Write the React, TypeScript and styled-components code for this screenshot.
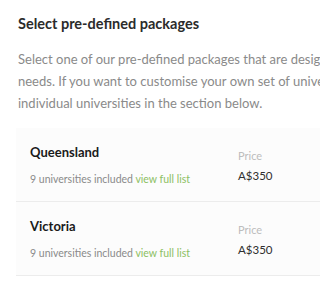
import React from 'react';
import styled, { createGlobalStyle } from 'styled-components';

const GlobalStyle = createGlobalStyle`
	html, body {
		margin: 0;
		padding: 0;
		background: #ffffff;
		overflow: hidden;
	}
	body {
		font-family: 'Source Sans Pro', 'Lato', 'Noto Sans', sans-serif;
	}
`;

interface PackageItem {
	name: string;
	count: number;
	price: string;
}

const packages: PackageItem[] = [
	{ name: 'Queensland', count: 9, price: 'A$350' },
	{ name: 'Victoria', count: 9, price: 'A$350' },
];

const descriptionLines = [
	'Select one of our pre-defined packages that are designed to suit your',
	'needs. If you want to customise your own set of universities, select',
	'individual universities in the section below.',
];

const App = () => {
	return (
		<>
			<GlobalStyle />
			<Section>
				<Title>Select pre-defined packages</Title>
				<Description>
					{descriptionLines.map((line) => (
						<Line key={line}>{line}</Line>
					))}
				</Description>

				<PackageList>
					{packages.map((item) => (
						<PackageCard key={item.name}>
							<PackageInfo>
								<PackageName>{item.name}</PackageName>
								<PackageMeta>
									{item.count} universities included{' '}
									<ViewLink href="#">view full list</ViewLink>
								</PackageMeta>
							</PackageInfo>
							<PriceBlock>
								<PriceLabel>Price</PriceLabel>
								<PriceValue>{item.price}</PriceValue>
							</PriceBlock>
						</PackageCard>
					))}
				</PackageList>
			</Section>
		</>
	);
};

export default App;

const Section = styled.div`
	width: 400px;
	padding: 14px 0 0 18px;
	box-sizing: border-box;
`;

const Title = styled.h2`
	margin: 0;
	font-size: 14.5px;
	font-weight: 700;
	line-height: 20px;
	color: #2b2b2b;
`;

const Description = styled.p`
	margin: 14px 0 0;
	font-size: 13px;
	line-height: 22px;
	color: #8a8a8a;
`;

const Line = styled.span`
	display: block;
	white-space: nowrap;
`;

const PackageList = styled.div`
	margin-top: 14px;
	margin-left: -2px;
	display: flex;
	flex-direction: column;
`;

const PackageCard = styled.div`
	display: flex;
	align-items: flex-start;
	padding: 16px 14px 14px;
	background: #fcfcfc;
	border-bottom: 1px solid #ececec;
`;

const PackageInfo = styled.div`
	flex: 0 0 208px;
	display: flex;
	flex-direction: column;
	gap: 10px;
`;

const PackageName = styled.div`
	font-size: 13px;
	font-weight: 700;
	line-height: 17px;
	color: #1a1a1a;
`;

const PackageMeta = styled.div`
	font-size: 10.5px;
	line-height: 16px;
	color: #8a8a8a;
`;

const ViewLink = styled.a`
	color: #8cc063;
	text-decoration: none;
`;

const PriceBlock = styled.div`
	display: flex;
	flex-direction: column;
	gap: 4px;
	padding-top: 4px;
`;

const PriceLabel = styled.div`
	font-size: 11px;
	line-height: 16px;
	color: #bdbdbd;
`;

const PriceValue = styled.div`
	font-size: 11.5px;
	line-height: 16px;
	color: #2f2f2f;
`;
